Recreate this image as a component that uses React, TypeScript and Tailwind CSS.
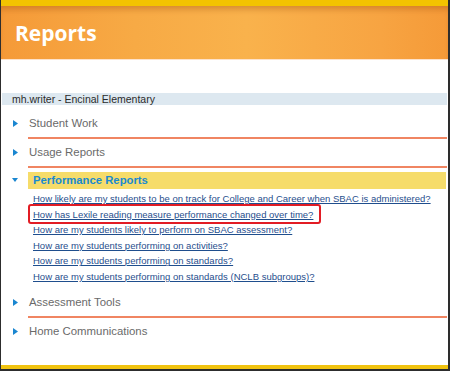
import React from "react"

const sans = { fontFamily: '"Liberation Sans", Arial, sans-serif' }

function RightArrow() {
  return (
    <svg width="5" height="7" viewBox="0 0 5 7" className="block">
      <path d="M0 0 L5 3.5 L0 7 Z" fill="#1a86d0" />
    </svg>
  )
}

function DownArrow() {
  return (
    <svg width="6" height="4" viewBox="0 0 6 4" className="block">
      <path d="M0 0 L6 0 L3 4 Z" fill="#1a86d0" />
    </svg>
  )
}

function Section({ title }: { title: string }) {
  return (
    <div className="flex">
      <div className="w-[27px] shrink-0 pl-[12px] pt-[10px]">
        <RightArrow />
      </div>
      <div className="flex-1 mr-[1px] pt-[5px] pb-[6px] border-b-2 border-[#f08562]">
        <div className="pl-[1px] text-[11.4px] leading-[16px] text-[#6a6a6a]">{title}</div>
      </div>
    </div>
  )
}

const links = [
  "How likely are my students to be on track for College and Career when SBAC is administered?",
  "How has Lexile reading measure performance changed over time?",
  "How are my students likely to perform on SBAC assessment?",
  "How are my students performing on activities?",
  "How are my students performing on standards?",
  "How are my students performing on standards (NCLB subgroups)?",
]

export default function App() {
  return (
    <div
      className="w-[450px] h-[371px] bg-white border-l border-r-2 border-b-2 border-[#2d2d2d] flex flex-col overflow-hidden"
      style={sans}
    >
      <div className="h-[6px] bg-[#f3c300]" />
      <div className="h-[53px] bg-[linear-gradient(90deg,#f59a38,#f7aa45_30%,#f9b24c_55%,#f7a442_85%,#f59a38)] shadow-[inset_0_6px_6px_-3px_rgba(150,70,0,0.35)] pl-[14px] pt-[13px]">
        <div
          className="text-white font-bold text-[21px] leading-[28px]"
          style={{ fontFamily: '"Open Sans", sans-serif' }}
        >
          Reports
        </div>
      </div>
      <div className="h-[1px] bg-[#fde2cb]" />

      <div className="mt-[33px] mx-[1px] h-[12px] bg-[#dde8f0] pl-[10px] text-[10.5px] leading-[12px] text-[#2b2b2b] overflow-hidden">
        mh.writer - Encinal Elementary
      </div>

      <div className="mt-[5px]">
        <Section title="Student Work" />
        <Section title="Usage Reports" />
      </div>

      <div className="flex mt-[4px]">
        <div className="w-[27px] shrink-0 pl-[11px] pt-[6px]">
          <DownArrow />
        </div>
        <div className="flex-1 mr-[2px] h-[17px] bg-[#f6dc6a] pl-[5px] text-[11.3px] leading-[17px] font-bold text-[#1a8ad0]">
          Performance Reports
        </div>
      </div>

      <div className="mt-[2px] pl-[32px] flex flex-col items-start">
        {links.map((l, i) => (
          <div key={i} className="h-[15.6px] text-[9.5px] leading-[15.6px] text-[#1f4e8d] whitespace-nowrap">
            {i === 1 ? (
              <span className="relative inline-block">
                <span className="underline">{l}</span>
                <span className="absolute -left-[5px] -right-[8px] -top-[3px] -bottom-[2px] border-2 border-[#e21c24] rounded-[3px]" />
              </span>
            ) : (
              <span className="underline">{l}</span>
            )}
          </div>
        ))}
      </div>

      <div className="mt-[4px]">
        <Section title="Assessment Tools" />
        <div className="flex">
          <div className="w-[27px] shrink-0 pl-[12px] pt-[10px]">
            <RightArrow />
          </div>
          <div className="flex-1 pt-[5px]">
            <div className="pl-[1px] text-[11.4px] leading-[16px] text-[#6a6a6a]">Home Communications</div>
          </div>
        </div>
      </div>

      <div className="mt-auto h-[4px] bg-[#f1c30f]" />
    </div>
  )
}
